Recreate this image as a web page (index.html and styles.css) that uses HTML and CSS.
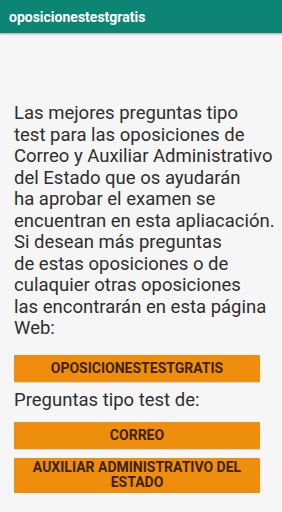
FILE: index.html
```html
<!DOCTYPE html>
<html lang="es">
<head>
  <meta charset="UTF-8">
  <meta name="viewport" content="width=device-width, initial-scale=1.0">
  <title>oposicionestestgratis</title>
  <link rel="stylesheet" href="styles.css">
</head>
<body>
  <div class="toolbar">
    <p class="toolbar-title">oposicionestestgratis</p>
  </div>

  <div class="content">
    <p class="intro">Las mejores preguntas tipo<br>
test para las oposiciones de<br>
Correo y Auxiliar Administrativo<br>
del Estado que os ayudarán<br>
ha aprobar el examen se<br>
encuentran en esta apliacación.<br>
Si desean más preguntas<br>
de estas oposiciones o de<br>
culaquier otras oposiciones<br>
las encontrarán en esta página<br>
Web:</p>

    <button class="web-button">OPOSICIONESTESTGRATIS</button>

    <p class="subtitle">Preguntas tipo test de:</p>

    <button class="web-button correo">CORREO</button>
    <button class="web-button">AUXILIAR ADMINISTRATIVO DEL ESTADO</button>
  </div>
</body>
</html>
```

FILE: styles.css
```css
body{
  margin: 0;
  background-color: #f6f6f6;
  font-family: Roboto, "Noto Sans", Arial, sans-serif;
}
.toolbar{
  height: 33px;
  background-color: #0d8574;
  box-shadow: 0 1px 2px rgba(0,0,0,0.35);
  padding-left: 9px;
}
.toolbar-title{
  margin: 0;
  color: white;
  font-size: 14px;
  font-weight: bold;
  line-height: 34px;
}
.content{
  padding: 70px 4px 0 14px;
}
.intro{
  margin: 0;
  color: #2e2e2e;
  font-size: 18.5px;
  line-height: 21.5px;
  white-space: nowrap;
}
.web-button{
  display: block;
  width: 246px;
  margin-top: 15px;
  padding: 6px 8px;
  border: none;
  border-radius: 1px;
  background-color: #ee8e0c;
  color: #3d2200;
  font-family: Roboto, "Noto Sans", Arial, sans-serif;
  font-size: 14px;
  font-weight: bold;
  line-height: 15px;
  box-shadow: 0 1px 1px rgba(0,0,0,0.15);
  cursor: pointer;
}
.subtitle{
  margin: 7px 0 0 0;
  color: #2e2e2e;
  font-size: 18.5px;
}
.correo{
  margin-top: 11px;
}
.correo + .web-button{
  margin-top: 9px;
  padding: 2.5px 8px;
}
```
